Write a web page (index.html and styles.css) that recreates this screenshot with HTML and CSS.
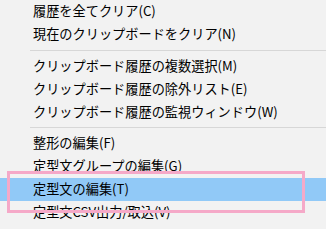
FILE: index.html
```html
<!DOCTYPE html>
<html lang="ja">
<head>
<meta charset="UTF-8" />
<title>メニュー</title>
<link rel="stylesheet" href="styles.css">
</head>
<body>
<ul class="menu">
  <li class="item">履歴を全てクリア(C)</li>
  <li class="item">現在のクリップボードをクリア(N)</li>
  <li class="sep"></li>
  <li class="item">クリップボード履歴の複数選択(M)</li>
  <li class="item">クリップボード履歴の除外リスト(E)</li>
  <li class="item">クリップボード履歴の監視ウィンドウ(W)</li>
  <li class="sep"></li>
  <li class="item">整形の編集(F)</li>
  <li class="item">定型文グループの編集(G)</li>
  <li class="item active">定型文の編集(T)</li>
  <li class="item">定型文CSV出力/取込(V)</li>
</ul>
<!-- 注釈の枠 -->
<div class="mark"></div>
</body>
</html>
```

FILE: styles.css
```css
* {
  box-sizing: border-box;
  margin: 0; padding: 0;
}
body {
  background: #f2f2f2;
  font-family: "Noto Sans CJK JP", "Noto Sans", sans-serif;
  font-size: 13.2px;
  color: #000;
  overflow: hidden;
  position: relative;
  height: 229px;
}
.menu {
  list-style: none;
}
.item {
  height: 23px;
  line-height: 22px;
  padding-left: 33px;
  white-space: nowrap;
}
.item.active {
  background: #91c9f7;
}
.sep {
  height: 8.5px;
  display: flex;
  align-items: center;
  padding-left: 30px;
}
.sep::before {
  content: "";
  flex: 1;
  height: 1px;
  background: #d7d7d7;
}
.mark {
  position: absolute;
  left: 7px;
  top: 171px;
  width: 298px;
  height: 42px;
  border: 3px solid #f5a9c8;
}
```
